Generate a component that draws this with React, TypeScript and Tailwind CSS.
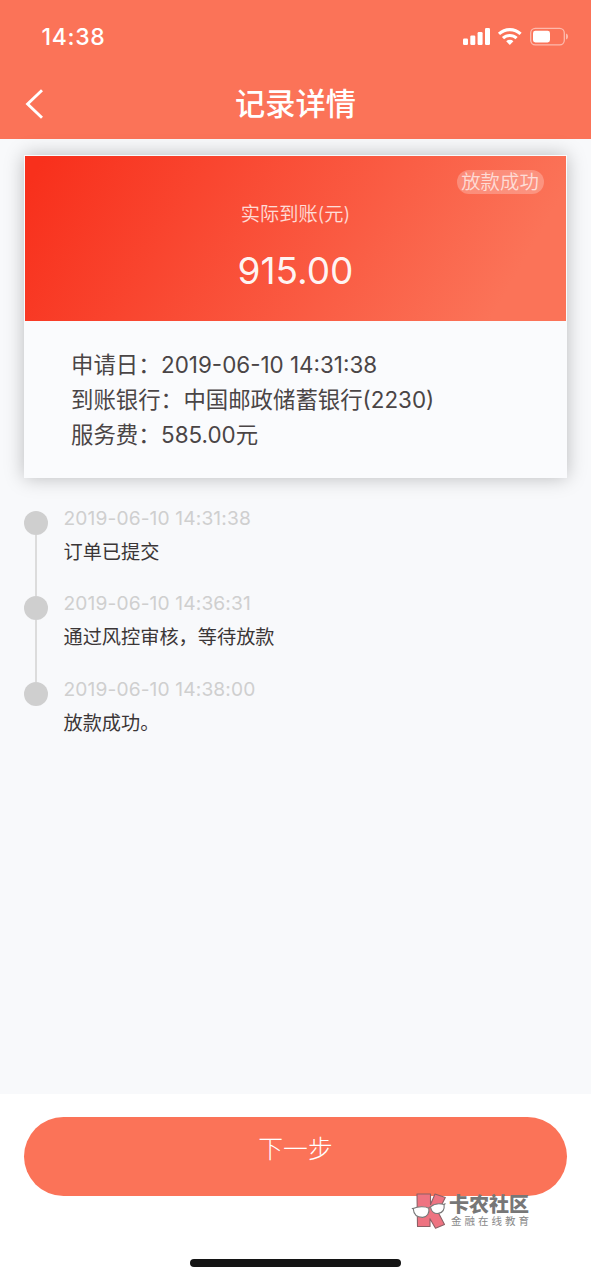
import type { ReactNode } from "react";

const details = [
  { label: "申请日：", value: "2019-06-10 14:31:38" },
  { label: "到账银行：", value: "中国邮政储蓄银行(2230)" },
  { label: "服务费：", value: "585.00元" },
];

const steps = [
  { time: "2019-06-10 14:31:38", text: "订单已提交" },
  { time: "2019-06-10 14:36:31", text: "通过风控审核，等待放款" },
  { time: "2019-06-10 14:38:00", text: "放款成功。" },
];

function StatusIcons() {
  return (
    <svg width="108" height="20" viewBox="0 0 108 20" fill="none">
      <g fill="#fff">
        <rect x="2" y="11.5" width="5" height="6.5" rx="1.2" />
        <rect x="9.3" y="8.5" width="5" height="9.5" rx="1.2" />
        <rect x="16.6" y="5" width="5" height="13" rx="1.2" />
        <rect x="24" y="1" width="5" height="17" rx="1.2" />
      </g>
      <g stroke="#fff" strokeWidth="3.1">
        <path d="M38 6.9a15.8 15.8 0 0 1 21.6 0" />
        <path d="M42 11.2a9.8 9.8 0 0 1 13.6 0" />
      </g>
      <path d="M45.2 14.3a5.2 5.2 0 0 1 7.2 0l-3.6 3.6z" fill="#fff" />
      <rect x="69.7" y="1.4" width="33.6" height="16.4" rx="4.6" stroke="#fff" strokeOpacity=".5" strokeWidth="1.3" />
      <rect x="72" y="3.8" width="17" height="11.6" rx="2.4" fill="#fff" />
      <path d="M105 6.6c2.7.6 2.7 5.4 0 6z" fill="#fff" fillOpacity=".5" />
    </svg>
  );
}

function Header({ children }: { children: ReactNode }) {
  return (
    <header className="h-[139px] bg-[#fb7358] text-white">
      <div className="flex h-[69px] items-start justify-between pl-[41.5px] pr-[22px] pt-[22px]">
        <span className="text-[23px] font-medium leading-[30px] tracking-[0.7px]">14:38</span>
        <span className="pt-[5px]"><StatusIcons /></span>
      </div>
      <div className="grid h-[70px] grid-cols-[60px_1fr_60px] items-center">
        <svg className="ml-[24px]" width="22" height="32" viewBox="0 0 22 32" fill="none" stroke="#fff" strokeWidth="2.9">
          <path d="M18 2.2 3.6 16 18 29.8" />
        </svg>
        <h1 className="text-center text-[30.2px] font-medium leading-[40px]">{children}</h1>
      </div>
    </header>
  );
}

function Watermark() {
  return (
    <div className="absolute left-[411px] top-[1191px] flex items-start text-[#777]">
      <svg width="36" height="38" viewBox="0 0 36 38" stroke="#8b6066" strokeWidth="1.1" strokeLinejoin="round">
        <path d="M6 3h13.5v10.5L24 3l10.3 3.5L27 21l6.5 12.5-9 3.8-5.5-9.5v7.7H6.5z" fill="#ee7381" />
        <g fill="#fff" stroke="#777">
          <path d="M2.2 17.5c4.5-2.3 12.6-2.3 15.6-.3.9 5-1.6 8.6-6.1 9.2-5 .1-9-2.7-9.5-8.9z" />
          <path d="M19.5 15.800c3.3-2.900 9-3.800 13.600-2.300.6 5-1.700 8.200-5.600 8.900-4.300.7-7.500-2-8-6.600z" />
          <path d="M.8 17.8l1.5-.5M33 13.5l1.5-1M17.7 17.2q.8-1.4 1.8-1.4" fill="none" />
        </g>
      </svg>
      <div className="pl-[2px] pt-[2px]">
        <p className="text-[20px] font-black leading-[24px]">卡农社区</p>
        <p className="pl-[2px] text-[10.5px] leading-[10px] tracking-[3px] text-[#888]">金融在线教育</p>
      </div>
    </div>
  );
}

export default function App() {
  return (
    <div lang="zh-CN" className="relative h-[1280px] w-[592px] overflow-hidden bg-white pr-px font-['Inter','Noto_Sans_CJK_SC',sans-serif]">
      <Header>记录详情</Header>
      <main className="h-[955px] bg-[#f8f9fb] px-[24px] pt-[16px]">
        <section className="h-[323px] bg-[#fafbfd] px-px pt-px shadow-[0_0_18px_rgba(0,0,0,0.25)]">
          <div className="h-[165px] bg-[linear-gradient(120deg,#f8301c_3%,#fb7358_88%)] pt-[14px] text-center text-white">
            <div className="flex justify-end pr-[22.5px]">
              <span className="h-[24px] w-[87px] rounded-full bg-white/25 text-[19.4px] font-[350] leading-[25px] text-white/70">放款成功</span>
            </div>
            <p className="mt-[6px] text-[19.2px] font-[350] leading-[28px] text-white/80">实际到账(元)</p>
            <p className="mt-[20px] text-[37px] leading-[46px] text-white/95">915.00</p>
          </div>
          <dl className="pl-[46px] pt-[26px] text-[22.4px] leading-[35px] text-[#4a4546]">
            {details.map((item) => (
              <div key={item.label} className="flex">
                <dt>{item.label}</dt>
                <dd className="pl-[0.5px]">{item.value}</dd>
              </div>
            ))}
          </dl>
        </section>
        <ol className="pt-[22.5px]">
          {steps.map((step, i) => (
            <li key={step.time} className="flex h-[85.5px]">
              <div className="flex w-[24px] flex-col items-center pt-[10px]">
                <span className="size-[24px] shrink-0 rounded-full bg-[#cfcfcf]" />
                {i < steps.length - 1 ? <span className="-mb-[10px] w-[2px] flex-1 bg-[#dcdcdc]" /> : null}
              </div>
              <div className="pl-[15.5px]">
                <p className="text-[19.2px] leading-[34px] tracking-[0.12px] text-[#cfcfcf]">{step.time}</p>
                <p className="text-[19.2px] leading-[34px] text-[#3b3637]">{step.text}</p>
              </div>
            </li>
          ))}
        </ol>
      </main>
      <footer className="flex flex-col items-center px-[24px] pt-[23px]">
        <button className="h-[79px] w-full rounded-full bg-[#fb7358] pb-[14px] text-[24.8px] font-light text-white">下一步</button>
        <span className="mt-[63px] h-[8px] w-[211px] rounded-full bg-[#141414]" />
      </footer>
      <Watermark />
    </div>
  );
}
